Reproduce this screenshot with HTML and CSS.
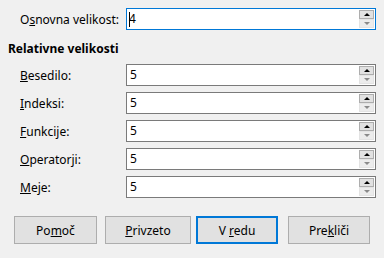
FILE: index.html
```html
<!DOCTYPE html>
<html lang="sl">
<head>
    <meta charset="UTF-8">
    <title>Velikosti pisav</title>
    <link rel="stylesheet" href="styles.css">
</head>
<body>
    <div class="dialog">
        <div class="field base">
            <label>O<u>s</u>novna velikost:</label>
            <div class="spin focused">
                <span class="value"><span class="caret"></span>4</span>
                <div class="arrows">
                    <span class="up"></span>
                    <span class="down"></span>
                </div>
            </div>
        </div>

        <div class="heading">Relativne velikosti</div>

        <div class="fields">
            <div class="field">
                <label><u>B</u>esedilo:</label>
                <div class="spin">
                    <span class="value">5</span>
                    <div class="arrows"><span class="up"></span><span class="down"></span></div>
                </div>
            </div>
            <div class="field">
                <label><u>I</u>ndeksi:</label>
                <div class="spin">
                    <span class="value">5</span>
                    <div class="arrows"><span class="up"></span><span class="down"></span></div>
                </div>
            </div>
            <div class="field">
                <label><u>F</u>unkcije:</label>
                <div class="spin">
                    <span class="value">5</span>
                    <div class="arrows"><span class="up"></span><span class="down"></span></div>
                </div>
            </div>
            <div class="field">
                <label><u>O</u>peratorji:</label>
                <div class="spin">
                    <span class="value">5</span>
                    <div class="arrows"><span class="up"></span><span class="down"></span></div>
                </div>
            </div>
            <div class="field">
                <label><u>M</u>eje:</label>
                <div class="spin">
                    <span class="value">5</span>
                    <div class="arrows"><span class="up"></span><span class="down"></span></div>
                </div>
            </div>
        </div>

        <div class="buttons">
            <button class="btn help">Po<u>m</u>oč</button>
            <button class="btn defaults"><u>P</u>rivzeto</button>
            <button class="btn ok">V <u>r</u>edu</button>
            <button class="btn cancel">Pre<u>k</u>liči</button>
        </div>
    </div>
</body>
</html>
```

FILE: styles.css
```css
body {
    margin: 0;
    background-color: #f0f0f0;
    font-family: "Noto Sans", "Open Sans", sans-serif;
    font-size: 12px;
    color: #000;
}
.dialog {
    display: flex;
    flex-direction: column;
    padding: 8px 8px 0 8px;
}
.field {
    display: flex;
    align-items: center;
    height: 22px;
    padding-left: 12px;
}
.field label {
    width: 106px;
}
.heading {
    font-weight: bold;
    margin-top: 13px;
    margin-bottom: 9px;
    line-height: 12px;
}
.fields {
    display: flex;
    flex-direction: column;
    gap: 6px;
}
.spin {
    width: 250px;
    height: 22px;
    box-sizing: border-box;
    border: 1px solid #7a7a7a;
    background-color: #fff;
    display: flex;
    justify-content: space-between;
    align-items: stretch;
}
.spin.focused {
    border-color: #0078d7;
}
.value {
    padding-left: 3px;
    line-height: 20px;
    display: flex;
    align-items: center;
}
.caret {
    display: inline-block;
    width: 1px;
    height: 15px;
    background-color: #000;
    margin-right: -1px;
    margin-left: -1px;
}
.arrows {
    display: flex;
    flex-direction: column;
    gap: 0;
    padding: 1px 1px 1px 0;
    width: 15px;
}
.arrows span {
    position: relative;
    height: 9px;
    box-sizing: border-box;
    background-color: #e6e6e6;
}
.arrows .up {
    border: 1px solid #adadad;
    background-color: #e1e1e1;
}
.arrows .down {
    border: 1px solid #e3e3e3;
    background-color: #ececec;
}
.arrows span::after {
    content: "";
    position: absolute;
    left: 4px;
    top: 2px;
    border-left: 3px solid transparent;
    border-right: 3px solid transparent;
}
.arrows .up::after {
    border-bottom: 3px solid #000;
}
.arrows .down::after {
    border-top: 3px solid #8a8a8a;
}
.buttons {
    display: flex;
    margin-top: 18px;
    padding-left: 6px;
}
.btn {
    height: 28px;
    box-sizing: border-box;
    background-color: #e1e1e1;
    border: 1px solid #adadad;
    font-family: inherit;
    font-size: 12px;
    color: #000;
    padding: 0;
}
.help {
    width: 83px;
}
.defaults {
    width: 86px;
    margin-left: 8px;
}
.ok {
    width: 82px;
    margin-left: 5px;
    border: 2px solid #0078d7;
}
.cancel {
    width: 82px;
    margin-left: 10px;
}
```
